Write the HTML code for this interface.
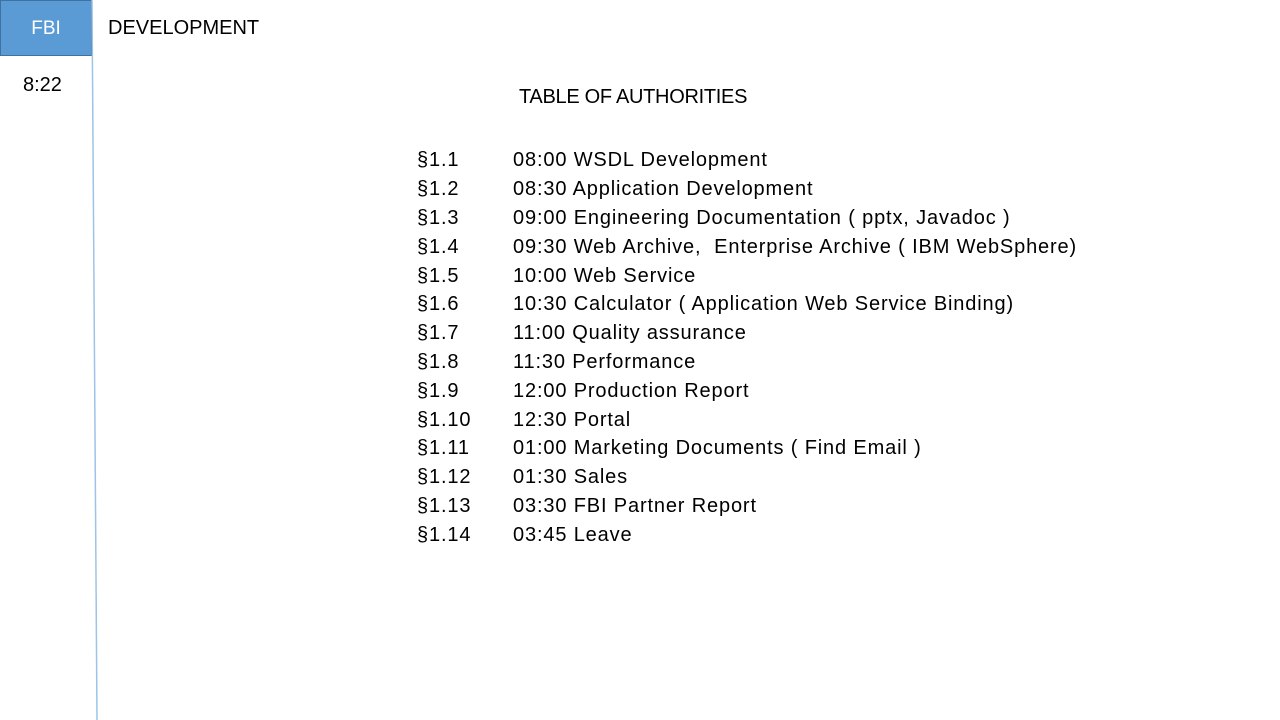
<!DOCTYPE html>
<html><head><meta charset="utf-8"><style>
body{margin:0;width:1280px;height:720px;background:#fff;position:relative;overflow:hidden;font-family:"Liberation Sans",Arial,sans-serif;color:#000}
.box{position:absolute;left:0;top:0;width:90px;height:54px;background:#5b9bd5;border:1px solid #41719c;color:#fff;font-size:19px;text-align:center;line-height:56px}
.t{position:absolute;font-size:20px;line-height:24px;white-space:nowrap;letter-spacing:0.85px}
</style></head><body>
<div class="box">FBI</div>
<svg style="position:absolute;left:0;top:0" width="1280" height="720"><line x1="92" y1="0" x2="97" y2="720" stroke="#9dc3e6" stroke-width="1.5"/></svg>
<div class="t" style="left:108px;top:16px;letter-spacing:0">DEVELOPMENT</div>
<div class="t" style="left:23px;top:73px;letter-spacing:0">8:22</div>
<div class="t" style="left:519px;top:85px;letter-spacing:-0.3px">TABLE OF AUTHORITIES</div>
<div class="t" style="left:417px;top:148px">§1.1</div><div class="t" style="left:513px;top:148px">08:00 WSDL Development</div>
<div class="t" style="left:417px;top:177px">§1.2</div><div class="t" style="left:513px;top:177px">08:30 Application Development</div>
<div class="t" style="left:417px;top:206px">§1.3</div><div class="t" style="left:513px;top:206px">09:00 Engineering Documentation ( pptx, Javadoc )</div>
<div class="t" style="left:417px;top:235px">§1.4</div><div class="t" style="left:513px;top:235px">09:30 Web Archive,&nbsp; Enterprise Archive ( IBM WebSphere)</div>
<div class="t" style="left:417px;top:264px">§1.5</div><div class="t" style="left:513px;top:264px">10:00 Web Service</div>
<div class="t" style="left:417px;top:292px">§1.6</div><div class="t" style="left:513px;top:292px">10:30 Calculator ( Application Web Service Binding)</div>
<div class="t" style="left:417px;top:321px">§1.7</div><div class="t" style="left:513px;top:321px">11:00 Quality assurance</div>
<div class="t" style="left:417px;top:350px">§1.8</div><div class="t" style="left:513px;top:350px">11:30 Performance</div>
<div class="t" style="left:417px;top:379px">§1.9</div><div class="t" style="left:513px;top:379px">12:00 Production Report</div>
<div class="t" style="left:417px;top:408px">§1.10</div><div class="t" style="left:513px;top:408px">12:30 Portal</div>
<div class="t" style="left:417px;top:436px">§1.11</div><div class="t" style="left:513px;top:436px">01:00 Marketing Documents ( Find Email )</div>
<div class="t" style="left:417px;top:465px">§1.12</div><div class="t" style="left:513px;top:465px">01:30 Sales</div>
<div class="t" style="left:417px;top:494px">§1.13</div><div class="t" style="left:513px;top:494px">03:30 FBI Partner Report</div>
<div class="t" style="left:417px;top:523px">§1.14</div><div class="t" style="left:513px;top:523px">03:45 Leave</div>
</body></html>
